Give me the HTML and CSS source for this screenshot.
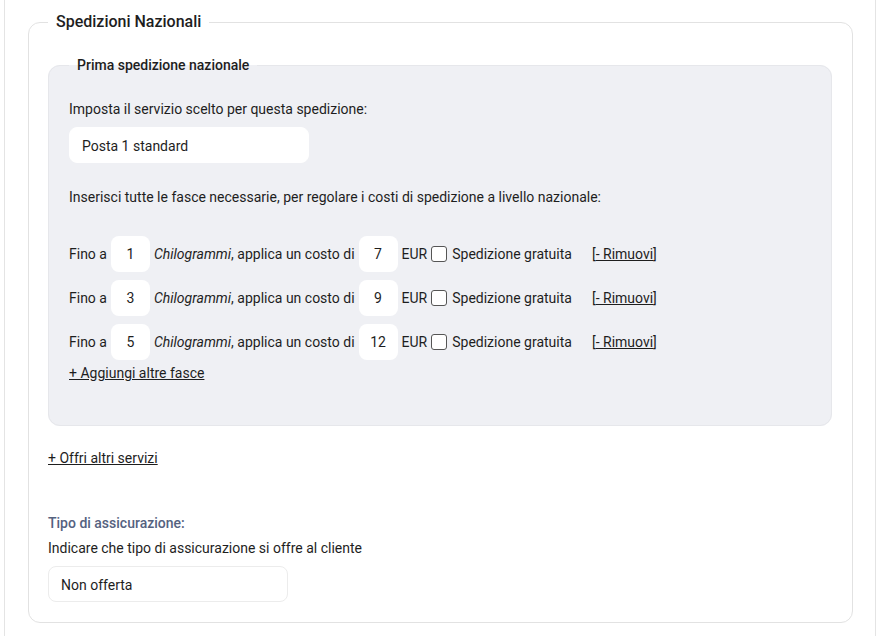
FILE: index.html
```html
<!DOCTYPE html>
<html lang="it">
<head>
  <meta charset="UTF-8" />
  <meta name="viewport" content="width=device-width, initial-scale=1.0"/>
  <title>Spedizioni Nazionali</title>
  <link rel="stylesheet" href="styles.css">
</head>
<body>
  <div class="page">
    <fieldset class="box">
      <legend>Spedizioni Nazionali</legend>

      <fieldset class="service">
        <legend>Prima spedizione nazionale</legend>

        <p class="hint">Imposta il servizio scelto per questa spedizione:</p>
        <div class="select">Posta 1 standard</div>

        <p class="hint intro">Inserisci tutte le fasce necessarie, per regolare i costi di spedizione a livello nazionale:</p>

        <div class="rows">
          <div class="row">
            <span>Fino a</span>
            <input class="num" type="text" value="1">
            <span><em>Chilogrammi</em>, applica un costo di</span>
            <input class="num" type="text" value="7">
            <span>EUR</span>
            <span class="check"></span>
            <span>Spedizione gratuita</span>
            <span class="remove">[<a href="#">- Rimuovi</a>]</span>
          </div>
          <div class="row">
            <span>Fino a</span>
            <input class="num" type="text" value="3">
            <span><em>Chilogrammi</em>, applica un costo di</span>
            <input class="num" type="text" value="9">
            <span>EUR</span>
            <span class="check"></span>
            <span>Spedizione gratuita</span>
            <span class="remove">[<a href="#">- Rimuovi</a>]</span>
          </div>
          <div class="row">
            <span>Fino a</span>
            <input class="num" type="text" value="5">
            <span><em>Chilogrammi</em>, applica un costo di</span>
            <input class="num" type="text" value="12">
            <span>EUR</span>
            <span class="check"></span>
            <span>Spedizione gratuita</span>
            <span class="remove">[<a href="#">- Rimuovi</a>]</span>
          </div>
        </div>

        <a href="#" class="add">+ Aggiungi altre fasce</a>
      </fieldset>

      <a href="#" class="more">+ Offri altri servizi</a>

      <h3 class="label">Tipo di assicurazione:</h3>
      <p class="hint">Indicare che tipo di assicurazione si offre al cliente</p>
      <div class="select">Non offerta</div>
    </fieldset>
  </div>
</body>
</html>
```

FILE: styles.css
```css
body {
  margin: 0;
  background: #fff;
  color: #1e1e1e;
  font-family: Roboto, 'Liberation Sans', sans-serif;
  font-size: 14px;
  line-height: 20px;
}

.page {
  margin: 0 4px;
  min-height: 636px;
  border-left: 1px solid #e4e4e4;
  border-right: 1px solid #e4e4e4;
  padding: 10px 22px 0 23px;
  box-sizing: border-box;
}

fieldset {
  margin: 0;
  min-width: 0;
}

.box {
  border: 1px solid #e2e2e2;
  border-radius: 12px;
  padding: 21px 20px 20px 19px;
}

.box > legend {
  font-size: 16px;
  line-height: 24px;
  font-weight: 500;
  padding: 0 8px;
}

.service {
  background: #eff0f4;
  border: 1px solid #e6e7eb;
  border-radius: 12px;
  padding: 24px 20px 42px 20px;
}

.service > legend {
  font-size: 14px;
  font-weight: 500;
  padding: 0 8px;
}

.hint {
  margin: 0;
}

.intro {
  margin-top: 24px;
}

.select {
  width: 240px;
  height: 36px;
  box-sizing: border-box;
  margin-top: 8px;
  padding: 8px 12px;
  background: #fff;
  border: 1px solid #ececec;
  border-radius: 8px;
}

.service .select {
  border-color: #fff;
}

.rows {
  margin-top: 29px;
  display: flex;
  flex-direction: column;
  gap: 8px;
}

.row {
  display: flex;
  align-items: center;
  gap: 4px;
}

.num {
  width: 39px;
  height: 36px;
  box-sizing: border-box;
  border: none;
  border-radius: 8px;
  background: #fff;
  text-align: center;
  font: inherit;
  color: inherit;
  padding: 0;
}

.check {
  width: 14px;
  height: 14px;
  border: 1px solid #555;
  border-radius: 3px;
  background: #fff;
  margin-right: 1px;
}

.remove {
  margin-left: 16px;
}

a {
  color: inherit;
  text-decoration: underline;
}

.add {
  display: inline-block;
  margin-top: 3px;
}

.more {
  display: inline-block;
  margin-top: 22px;
}

.label {
  margin: 45px 0 5px;
  font-size: 14px;
  line-height: 20px;
  font-weight: 500;
  color: #55627f;
}
```
